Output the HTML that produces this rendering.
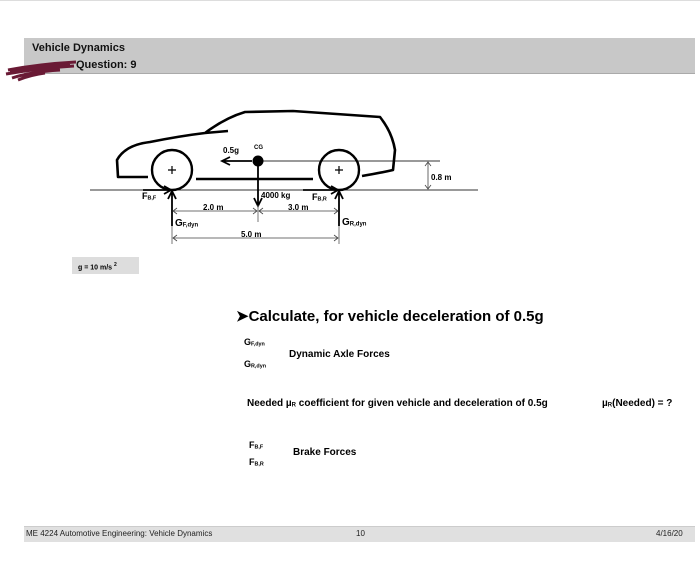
<!DOCTYPE html>
<html><head><meta charset="utf-8"><style>
body{margin:0;width:700px;height:575px;background:#fff;position:relative;overflow:hidden;font-family:"Liberation Sans",Arial,sans-serif;}
.a{position:absolute;white-space:nowrap;}
b{font-weight:bold}
sub{font-size:0.6em;vertical-align:-0.1em}
</style></head><body>
<div class="a" style="left:0;top:0;width:700px;height:1px;background:#ddd"></div>
<div class="a" style="left:24px;top:38px;width:671px;height:35px;background:#c8c8c8;border-bottom:1px solid #aaa"></div>
<div class="a" style="left:32px;top:42px;font-size:11px;font-weight:bold;color:#111">Vehicle Dynamics</div>
<div class="a" style="left:76px;top:59px;font-size:11px;font-weight:bold;color:#111">Question: 9</div>
<svg class="a" style="left:0;top:0" width="700" height="575">
<path d="M8 70 Q40 64 76 62 M6 74 Q40 68 74 66 M12 78 Q30 72 60 70 M18 80 Q30 75 45 73 M10 72 L70 64" stroke="#6a1a35" stroke-width="3" fill="none"/>
<line x1="90" y1="190" x2="478" y2="190" stroke="#333" stroke-width="1"/>
<line x1="258" y1="161" x2="440" y2="161" stroke="#333" stroke-width="1"/>
<path d="M148 177 L118 177 L117 160 Q125 145 150 142 Q180 136 205 133 L228 131 M205 133 Q225 118 245 112 L293 111 L380 117 Q392 132 395 150 L393 170 Q380 173 362 176 M196 179 L313 179" stroke="#000" stroke-width="2.6" fill="none" stroke-linejoin="round"/>
<circle cx="172" cy="170" r="20" stroke="#000" stroke-width="2.4" fill="none"/>
<circle cx="339" cy="170" r="20" stroke="#000" stroke-width="2.4" fill="none"/>
<path d="M172 166 v8 M168 170 h8 M339 166 v8 M335 170 h8" stroke="#000" stroke-width="1.2"/>
<circle cx="258" cy="161" r="5.5" fill="#000"/>
<path d="M252 161 L224 161 M230 157 L222 161 L230 165" stroke="#000" stroke-width="1.8" fill="none"/>
<path d="M258 166 L258 205 M254 198 L258 206 L262 198" stroke="#000" stroke-width="1.8" fill="none"/>
<line x1="258" y1="205" x2="258" y2="222" stroke="#555" stroke-width="0.8"/>
<path d="M143 190 L170 190 M164 186 L171 190 L164 194" stroke="#000" stroke-width="1.8" fill="none"/>
<path d="M303 190 L337 190 M331 186 L338 190 L331 194" stroke="#000" stroke-width="1.8" fill="none"/>
<path d="M172 226 L172 192 M168 199 L172 191 L176 199" stroke="#000" stroke-width="1.8" fill="none"/>
<path d="M339 226 L339 192 M335 199 L339 191 L343 199" stroke="#000" stroke-width="1.8" fill="none"/>
<line x1="172" y1="226" x2="172" y2="244" stroke="#555" stroke-width="0.8"/>
<line x1="339" y1="226" x2="339" y2="244" stroke="#555" stroke-width="0.8"/>
<path d="M173 211 L257 211 M177 208 L173 211 L177 214 M253 208 L257 211 L253 214 M259 211 L338 211 M263 208 L259 211 L263 214 M334 208 L338 211 L334 214 M173 238 L338 238 M177 235 L173 238 L177 241 M334 235 L338 238 L334 241" stroke="#444" stroke-width="0.8" fill="none"/>
<path d="M428 162 L428 189 M425 166 L428 162 L431 166 M425 185 L428 189 L431 185" stroke="#444" stroke-width="0.8" fill="none"/>
</svg>
<div class="a" style="left:223px;top:146px;font-size:8px;font-weight:bold">0.5g</div>
<div class="a" style="left:254px;top:145px;font-size:6px;font-weight:bold">CG</div>
<div class="a" style="left:431px;top:173px;font-size:8px;font-weight:bold">0.8 m</div>
<div class="a" style="left:261px;top:191px;font-size:8px;font-weight:bold">4000 kg</div>
<div class="a" style="left:142px;top:191px;font-size:9px;font-weight:bold">F<sub>B,F</sub></div>
<div class="a" style="left:312px;top:192px;font-size:9px;font-weight:bold">F<sub>B,R</sub></div>
<div class="a" style="left:203px;top:203px;font-size:8px;font-weight:bold">2.0 m</div>
<div class="a" style="left:288px;top:203px;font-size:8px;font-weight:bold">3.0 m</div>
<div class="a" style="left:241px;top:230px;font-size:8px;font-weight:bold">5.0 m</div>
<div class="a" style="left:175px;top:218px;font-size:10px;font-weight:bold">G<sub>F,dyn</sub></div>
<div class="a" style="left:342px;top:217px;font-size:10px;font-weight:bold">G<sub>R,dyn</sub></div>
<div class="a" style="left:72px;top:257px;width:67px;height:17px;background:#ddd"></div>
<div class="a" style="left:78px;top:262px;font-size:7px;font-weight:bold">g = 10 m/s <sup style="font-size:5px">2</sup></div>
<div class="a" style="left:236px;top:307px;font-size:15px;font-weight:bold">&#10148;Calculate, for vehicle deceleration of 0.5g</div>
<div class="a" style="left:244px;top:337px;font-size:9px;font-weight:bold">G<sub>F,dyn</sub></div>
<div class="a" style="left:289px;top:349px;font-size:10px;font-weight:bold">Dynamic Axle Forces</div>
<div class="a" style="left:244px;top:359px;font-size:9px;font-weight:bold">G<sub>R,dyn</sub></div>
<div class="a" style="left:247px;top:398px;font-size:10px;font-weight:bold">Needed µ<sub>R</sub> coefficient for given vehicle and deceleration of 0.5g</div>
<div class="a" style="left:602px;top:398px;font-size:10px;font-weight:bold">µ<sub>R</sub>(Needed) = ?</div>
<div class="a" style="left:249px;top:440px;font-size:9px;font-weight:bold">F<sub>B,F</sub></div>
<div class="a" style="left:293px;top:447px;font-size:10px;font-weight:bold">Brake Forces</div>
<div class="a" style="left:249px;top:457px;font-size:9px;font-weight:bold">F<sub>B,R</sub></div>
<div class="a" style="left:24px;top:526px;width:671px;height:15px;background:#e0e0e0;border-top:1px solid #ccc"></div>
<div class="a" style="left:26px;top:529px;font-size:8px;color:#222">ME 4224 Automotive Engineering: Vehicle Dynamics</div>
<div class="a" style="left:356px;top:529px;font-size:8px;color:#222">10</div>
<div class="a" style="left:656px;top:529px;font-size:8px;color:#222">4/16/20</div>
</body></html>
